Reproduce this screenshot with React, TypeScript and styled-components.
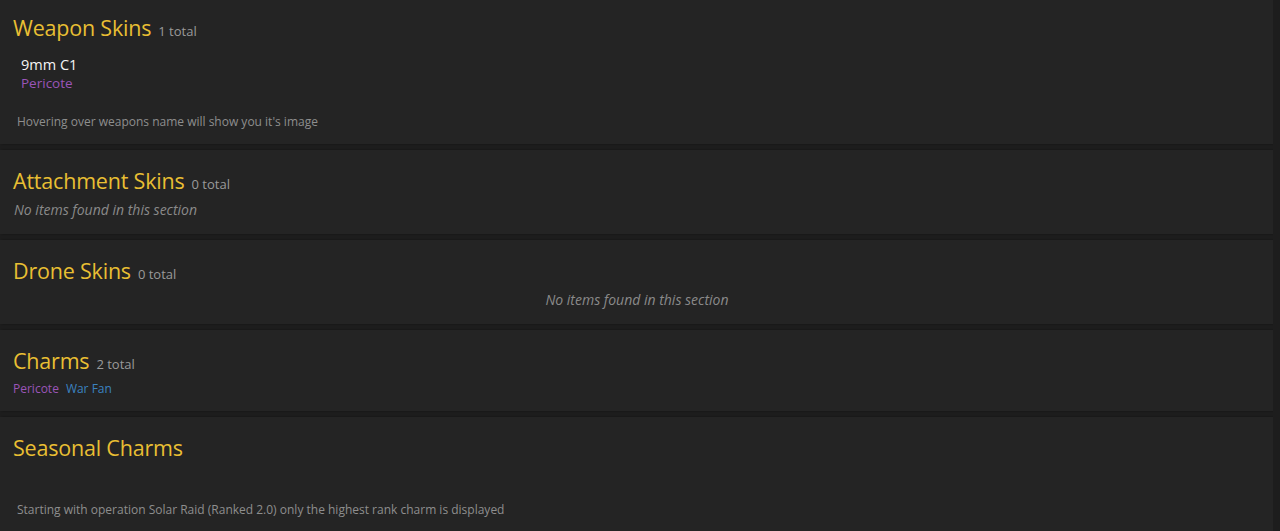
import styled, { createGlobalStyle } from "styled-components";

const GlobalStyle = createGlobalStyle`
  html, body {
    margin: 0;
    padding: 0;
    background: #1d1d1d;
    font-family: "Open Sans", "Liberation Sans", sans-serif;
  }
`;

const Page = styled.div`
  display: flex;
  flex-direction: column;
  gap: 6px;
  width: 1273px;
  height: 531px;
  overflow: hidden;
`;

const Card = styled.section`
  background: #242424;
  padding: 17px 13px 14px;
  display: flex;
  flex-direction: column;
  box-shadow: 2px 0 2px rgba(0, 0, 0, 0.35);
  &:first-child {
    padding-top: 14px;
  }
`;

const Header = styled.div`
  display: flex;
  align-items: baseline;
  gap: 7px;
  height: 28px;
  line-height: 28px;
`;

const Title = styled.h2`
  margin: 0;
  font-size: 21.5px;
  font-weight: 500;
  color: #e9bf33;
  letter-spacing: -0.2px;
`;

const Count = styled.span`
  font-size: 13px;
  color: #9a9a9a;
`;

const ItemList = styled.div`
  display: flex;
  flex-direction: column;
  padding: 14px 8px 0;
`;

const Item = styled.div`
  display: flex;
  flex-direction: column;
  line-height: 18px;
`;

const ItemName = styled.span`
  font-size: 14.5px;
  font-weight: 500;
  color: #f4f4f4;
`;

const Rarity = styled.span<{ $tone: "purple" | "blue"; $size: number }>`
  font-size: ${({ $size }) => $size}px;
  color: ${({ $tone }) => ($tone === "purple" ? "#9b55b8" : "#3b82c0")};
`;

const Note = styled.p<{ $top: number }>`
  margin: ${({ $top }) => $top}px 0 0 4px;
  font-size: 12px;
  line-height: 16px;
  color: #8e8e8e;
`;

const Empty = styled.p<{ $center?: boolean }>`
  margin: 5px 0 0 1px;
  font-size: 14px;
  line-height: 20px;
  font-style: italic;
  color: #8a8a8a;
  text-align: ${({ $center }) => ($center ? "center" : "left")};
`;

const Tags = styled.div`
  display: flex;
  gap: 7px;
  margin-top: 6px;
  line-height: 16px;
`;

export default function App() {
  return (
    <>
      <GlobalStyle />
      <Page>
        <Card>
          <Header>
            <Title>Weapon Skins</Title>
            <Count>1 total</Count>
          </Header>
          <ItemList>
            <Item>
              <ItemName>9mm C1</ItemName>
              <Rarity $tone="purple" $size={13.5}>
                Pericote
              </Rarity>
            </Item>
          </ItemList>
          <Note $top={22}>Hovering over weapons name will show you it's image</Note>
        </Card>
        <Card>
          <Header>
            <Title>Attachment Skins</Title>
            <Count>0 total</Count>
          </Header>
          <Empty>No items found in this section</Empty>
        </Card>
        <Card>
          <Header>
            <Title>Drone Skins</Title>
            <Count>0 total</Count>
          </Header>
          <Empty $center>No items found in this section</Empty>
        </Card>
        <Card>
          <Header>
            <Title>Charms</Title>
            <Count>2 total</Count>
          </Header>
          <Tags>
            <Rarity $tone="purple" $size={12}>
              Pericote
            </Rarity>
            <Rarity $tone="blue" $size={12}>
              War Fan
            </Rarity>
          </Tags>
        </Card>
        <Card>
          <Header>
            <Title>Seasonal Charms</Title>
          </Header>
          <Note $top={40}>
            Starting with operation Solar Raid (Ranked 2.0) only the highest rank charm is displayed
          </Note>
        </Card>
      </Page>
    </>
  );
}
